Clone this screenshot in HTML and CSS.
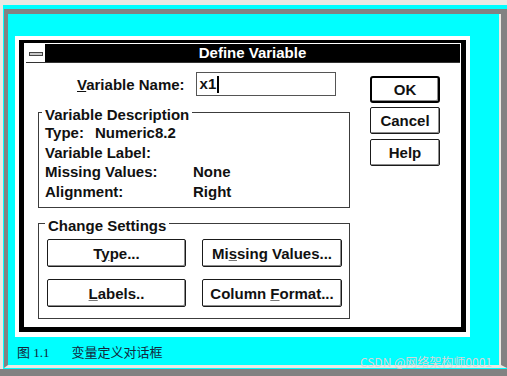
FILE: index.html
```html
<!DOCTYPE html>
<html>
<head>
<meta charset="utf-8">
<link rel="stylesheet" href="styles.css">
</head>
<body>
<div class="sheet">
  <div class="bevel">
    <div class="inner">
      <div class="dialog">
        <div class="frame">
          <div class="titlebar">
            <div class="sysmenu"><span class="dash"></span></div>
            <div class="title">Define Variable</div>
          </div>
          <div class="dlgbody">
            <div class="leftcol">
              <div class="namerow">
                <span class="namelabel"><u>V</u>ariable Name:</span>
                <span class="field"><span>x1</span><span class="caret"></span></span>
              </div>
              <div class="group g1">
                <span class="legend">Variable Description</span>
                <div class="rows">
                  <div class="row">Type:<span class="typeval">Numeric8.2</span></div>
                  <div class="row">Variable Label:</div>
                  <div class="row"><span class="key">Missing Values:</span>None</div>
                  <div class="row"><span class="key">Alignment:</span>Right</div>
                </div>
              </div>
              <div class="group g2">
                <span class="legend">Change Settings</span>
                <div class="btngrid">
                  <div class="btn"><span>T<u>y</u>pe...</span></div>
                  <div class="btn"><span>Mi<u>s</u>sing Values...</span></div>
                  <div class="btn"><span><u>L</u>abels..</span></div>
                  <div class="btn"><span>Column <u>F</u>ormat...</span></div>
                </div>
              </div>
            </div>
            <div class="rightcol">
              <div class="btn side default"><span>OK</span></div>
              <div class="btn side"><span>Cancel</span></div>
              <div class="btn side help"><span>Help</span></div>
            </div>
          </div>
        </div>
      </div>
      <div class="caption"><span class="fig">图</span> 1.1<span class="cn">变量定义对话框</span></div>
    </div>
  </div>
</div>
<div class="band"></div>
<div class="watermark">CSDN @网络架构师0001</div>
</body>
</html>
```

FILE: styles.css
```css
html, body {
  margin: 0;
  padding: 0;
}
body {
  width: 507px;
  height: 376px;
  overflow: hidden;
  background: #ebe9e3;
  position: relative;
  font-family: "Liberation Sans", Arial, sans-serif;
  padding-top: 5px;
  box-sizing: border-box;
}
.sheet {
  margin-left: 3px;
  padding-top: 4px;
  padding-bottom: 1px;
  background: #00ffff;
}
.bevel {
  margin-left: 1px;
  border-top: 5px solid #828282;
  border-left: 4px solid #828282;
  border-right: 6px solid #828282;
  border-bottom: 3px solid #ebe9e3;
  height: 351px;
}
.inner {
  height: 351px;
  border-right: 2px solid #ebe9e3;
  padding: 22px 0 0 7px;
  box-sizing: border-box;
}
.dialog {
  width: 455px;
  box-sizing: border-box;
  background: #fff;
  border: 4px solid #fff;
  border-bottom-width: 5px;
}
.frame {
  border: 5px solid #000;
  border-top-width: 3px;
  background: #fff;
}
.titlebar {
  display: flex;
  height: 18px;
  margin: 1px 1px 0 2px;
  border-bottom: 1px solid #333;
}
.sysmenu {
  width: 19px;
  background: #fff;
  display: flex;
  align-items: center;
  justify-content: center;
}
.dash {
  display: block;
  width: 12px;
  height: 2px;
  background: #c8c8c8;
  border: 1px solid #444;
  margin-top: 2px;
}
.title {
  flex: 1;
  background: #000;
  color: #fff;
  font-weight: bold;
  font-size: 15px;
  line-height: 18px;
  text-align: center;
}
.dlgbody {
  display: flex;
  padding: 9px 0 8px 14px;
  font-weight: bold;
  font-size: 15px;
  color: #111;
}
.leftcol {
  width: 312px;
}
.namerow {
  display: flex;
  align-items: center;
  height: 24px;
}
.namelabel {
  margin-left: 39px;
}
.field {
  margin-left: 11px;
  width: 140px;
  height: 24px;
  box-sizing: border-box;
  border: 1px solid #555;
  padding-left: 3px;
  display: flex;
  align-items: center;
  line-height: 20px;
}
.caret {
  display: inline-block;
  width: 2px;
  height: 17px;
  background: #000;
  margin-left: 1px;
}
.group {
  border: 1px solid #3c3c3c;
  height: 96px;
  box-sizing: border-box;
}
.g1 {
  margin-top: 16px;
}
.g2 {
  margin-top: 15px;
}
.legend {
  display: table;
  background: #fff;
  line-height: 15px;
  margin-top: -6px;
  padding: 0 3px;
}
.g1 .legend {
  margin-left: 3px;
}
.g2 .legend {
  margin-left: 6px;
}
.rows {
  padding: 1px 0 0 6px;
}
.row {
  line-height: 19.67px;
  height: 19.67px;
}
.typeval {
  margin-left: 11px;
}
.key {
  display: inline-block;
  width: 148px;
}
.btngrid {
  display: grid;
  grid-template-columns: 139px 140px;
  grid-auto-rows: 28px;
  column-gap: 16px;
  row-gap: 12px;
  margin: 6px 0 0 8px;
}
.btn {
  border: 1px solid #1a1a1a;
  border-radius: 2px;
  box-shadow: inset -1px -1px 0 #8c8c8c;
  display: flex;
  align-items: center;
  justify-content: center;
  background: #fff;
  box-sizing: border-box;
  white-space: pre;
}
.btn u {
  text-decoration-color: #777;
}
.rightcol {
  margin-left: 20px;
  margin-top: 4px;
  width: 70px;
  display: flex;
  flex-direction: column;
}
.side {
  height: 27px;
  margin-bottom: 4px;
}
.side.default {
  border: 2px solid #000;
  border-radius: 3px;
}
.side.help {
  margin-top: 1px;
}
.caption {
  margin-top: 7px;
  padding-left: 2px;
  font-family: "Liberation Serif", "Noto Sans CJK SC", serif;
  font-size: 13px;
  line-height: 16px;
  height: 16px;
  color: #13263a;
}
.fig {
  font-family: "Noto Sans CJK SC", sans-serif;
}
.cn {
  font-family: "Noto Sans CJK SC", sans-serif;
  margin-left: 22px;
}
.band {
  height: 7px;
  background: #828282;
}
.watermark {
  position: absolute;
  right: 15px;
  bottom: 7px;
  font-family: "Noto Sans CJK SC", sans-serif;
  font-size: 12px;
  line-height: 14px;
  color: #d6d6d6;
  white-space: nowrap;
}
```
